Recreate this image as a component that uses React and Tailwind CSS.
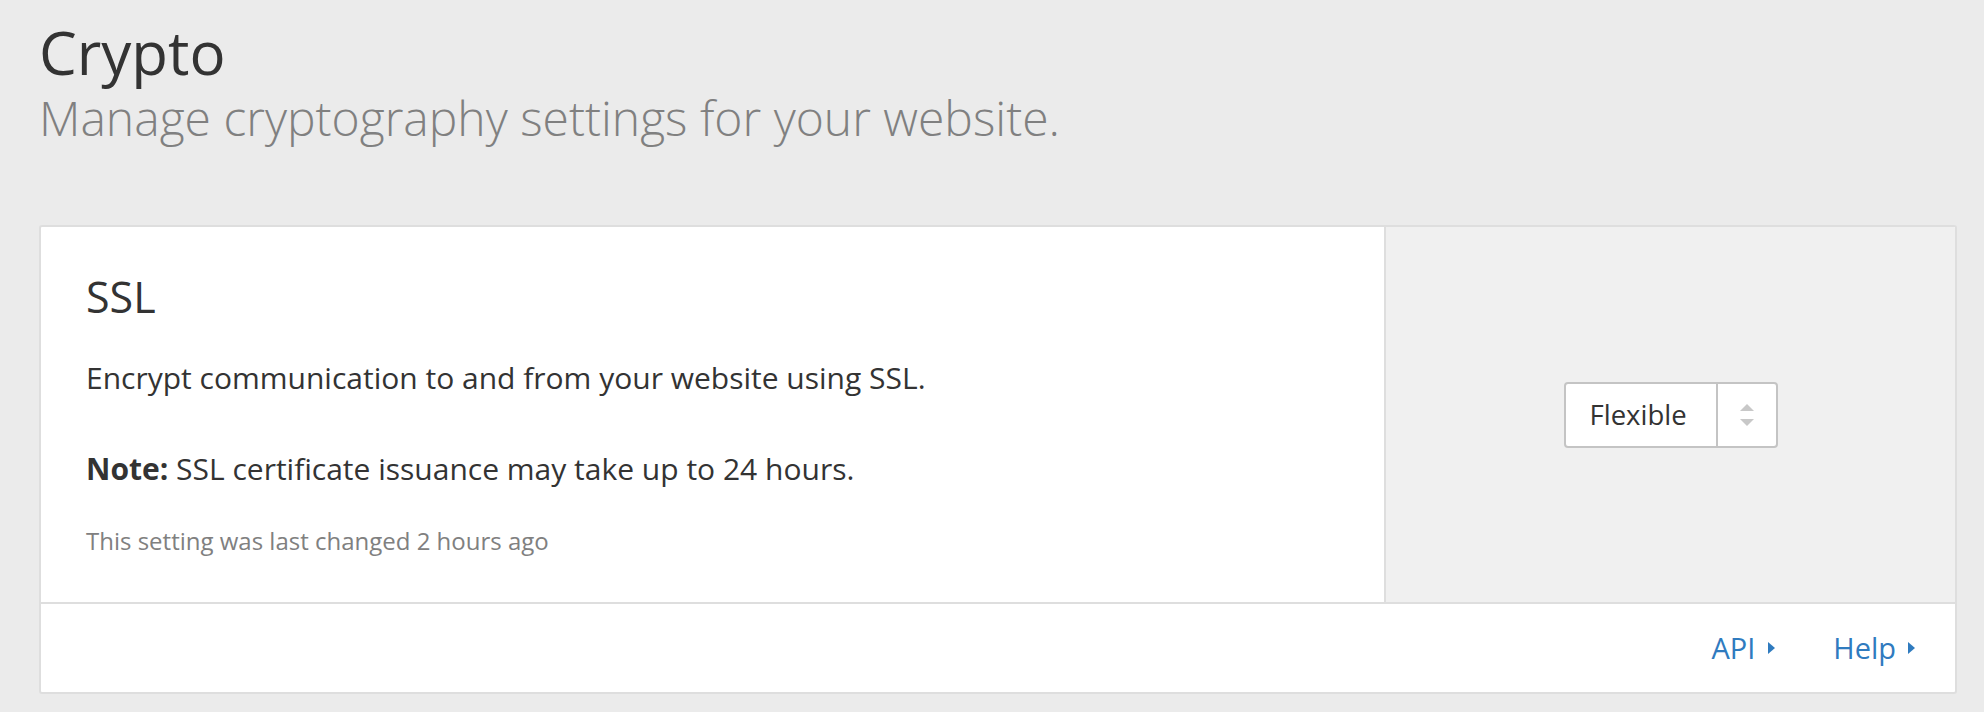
const FONT = { fontFamily: '"Open Sans", "Liberation Sans", sans-serif' };

function Caret() {
  return (
    <svg width="7" height="12" viewBox="0 0 7 12" className="shrink-0">
      <path d="M0 0 L7 6 L0 12 Z" fill="#2f7bbf" />
    </svg>
  );
}

function SelectBox() {
  return (
    <div className="flex h-[66px] w-[214px] rounded-[4px] border-2 border-[#c4c4c4] bg-white">
      <div className="flex flex-1 items-center pl-[24px] text-[27.5px] leading-[40px] text-[#333]">
        Flexible
      </div>
      <div className="flex w-[60px] flex-col items-center justify-center gap-[8px] border-l-2 border-[#c4c4c4]">
        <svg width="14" height="7" viewBox="0 0 14 7">
          <path d="M0 7 L7 0 L14 7 Z" fill="#c8c8c8" />
        </svg>
        <svg width="14" height="7" viewBox="0 0 14 7">
          <path d="M0 0 L14 0 L7 7 Z" fill="#c8c8c8" />
        </svg>
      </div>
    </div>
  );
}

export default function App() {
  return (
    <div className="h-[712px] w-full bg-[#ebebeb] pl-[39px] pr-[27px] pt-[16px]" style={FONT}>
      <h1 className="text-[60px] leading-[72px] font-normal text-[#333]">Crypto</h1>
      <p className="mt-[3px] text-[48px] leading-[54px] font-light text-[#808080]">
        Manage cryptography settings for your website.
      </p>

      <div className="mt-[80px] overflow-hidden rounded-[3px] border-2 border-[#dedede] bg-white">
        <div className="flex h-[377px] border-b-2 border-[#dedede]">
          <div className="flex-1 px-[45px] pt-[43px]">
            <h2 className="text-[43px] leading-[54px] font-normal text-[#333]">SSL</h2>
            <p className="mt-[34px] text-[30px] leading-[40px] text-[#333]">
              Encrypt communication to and from your website using SSL.
            </p>
            <p className="mt-[51px] text-[30px] leading-[40px] text-[#333]">
              <span className="font-bold">Note:</span> SSL certificate issuance may take up to 24 hours.
            </p>
            <p className="mt-[37px] text-[24px] leading-[30px] text-[#808080]">
              This setting was last changed 2 hours ago
            </p>
          </div>
          <div className="flex w-[571px] items-center justify-center border-l-2 border-[#dedede] bg-[#f0f0f0]">
            <SelectBox />
          </div>
        </div>
        <div className="flex h-[88px] items-center justify-end gap-[58px] pr-[40px]">
          <a className="flex items-center gap-[13px] text-[29px] leading-[40px] text-[#2f7bbf]">
            API <Caret />
          </a>
          <a className="flex items-center gap-[12px] text-[29px] leading-[40px] text-[#2f7bbf]">
            Help <Caret />
          </a>
        </div>
      </div>
    </div>
  );
}
